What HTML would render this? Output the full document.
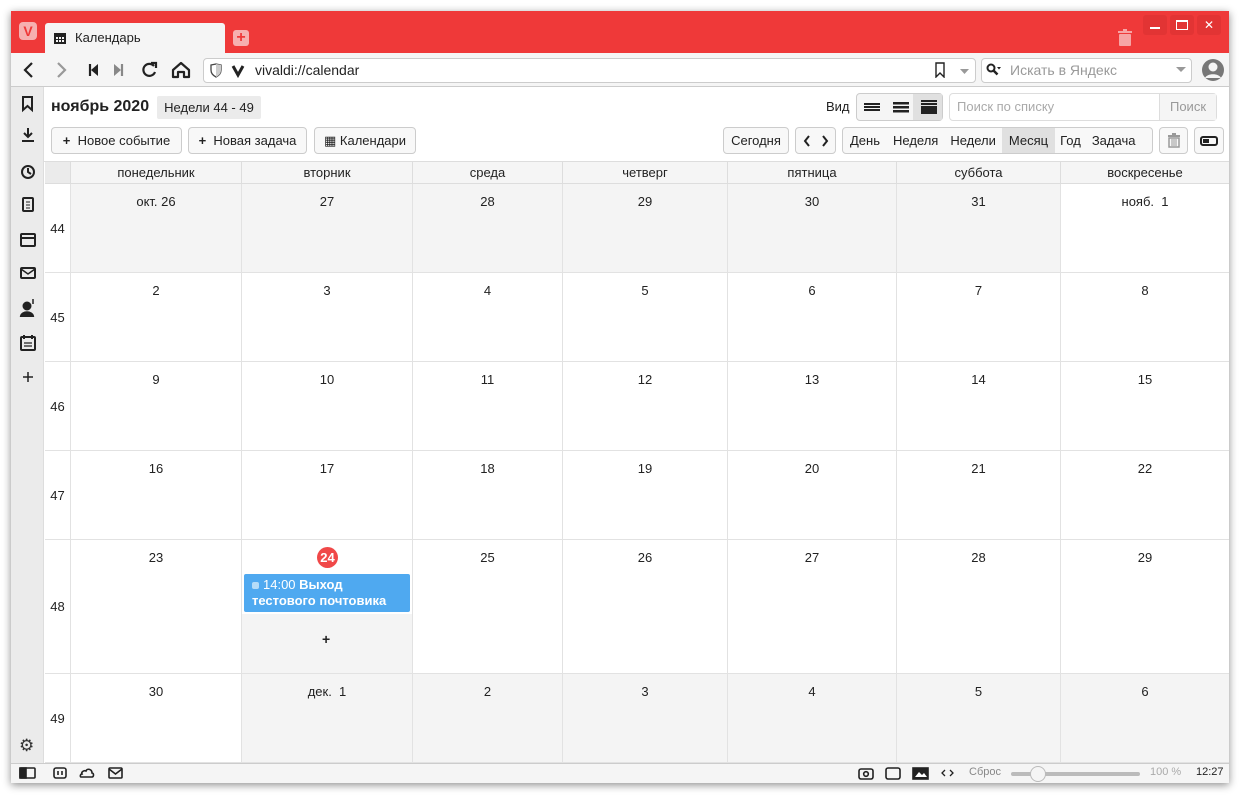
<!DOCTYPE html><html><head><meta charset="utf-8"><style>
*{box-sizing:border-box;margin:0;padding:0}
body{width:1248px;height:803px;background:#fff;font-family:"Liberation Sans","DejaVu Sans",sans-serif;font-size:13px;color:#222;position:relative;overflow:hidden}
.a{position:absolute}
.win{left:11px;top:11px;width:1218px;height:772px;box-shadow:0 2px 8px rgba(0,0,0,.45);background:#fff}
.btn{position:absolute;height:27px;border:1px solid #ccc;border-radius:4px;background:#f8f8f8;display:flex;align-items:center;justify-content:center;font-size:13px;color:#222}
.hd{position:absolute;top:162px;height:22px;background:#f5f5f5;border-bottom:1px solid #ddd;border-right:1px solid #ddd;text-align:center;line-height:22px;font-size:13px}
.c{position:absolute;border-right:1px solid #e2e2e2;border-bottom:1px solid #e2e2e2;text-align:center;padding-top:10px;font-size:13px}
.g{background:#f4f4f4}
.wk{position:absolute;left:45px;width:26px;border-right:1px solid #e2e2e2;border-bottom:1px solid #e2e2e2;display:flex;align-items:center;justify-content:center;font-size:13px;background:#fff}
</style></head><body>
<div class="a win"></div>
<div class="a" style="left:11px;top:11px;width:1218px;height:42px;background:#ef3939"></div>
<div class="a" style="left:19px;top:22px;width:18px;height:18px;background:#f6b0b0;border-radius:4px;color:#ef3939;font-weight:bold;text-align:center;line-height:18px;font-size:14px">V</div>
<div class="a" style="left:45px;top:23px;width:180px;height:30px;background:#f5f5f5;border-radius:3px 3px 0 0"></div>
<svg class="a" style="left:53px;top:31px" width="14" height="14"><rect x="1" y="2" width="12" height="11" fill="#222"/><rect x="3" y="6" width="8" height="5" fill="#f5f5f5"/><rect x="5" y="6" width="1" height="5" fill="#222"/><rect x="8" y="6" width="1" height="5" fill="#222"/><rect x="3" y="8" width="8" height="1" fill="#222"/></svg>
<div class="a" style="left:75px;top:30px;font-size:13px">Календарь</div>
<div class="a" style="left:233px;top:30px;width:16px;height:16px;background:#f6b0b0;border-radius:3px;color:#ef3939;text-align:center;line-height:16px;font-weight:bold;font-size:16px">+</div>
<svg class="a" style="left:1118px;top:29px" width="14" height="17"><rect x="0" y="2" width="14" height="2" fill="#f6a5a5"/><rect x="5" y="0" width="4" height="2" fill="#f6a5a5"/><rect x="1" y="5" width="12" height="12" rx="1" fill="#f6a5a5"/></svg>
<div class="a" style="left:1143px;top:15px;width:24px;height:20px;background:#e23434;border-radius:3px"><div style="margin:12px 7px 0;width:10px;height:2px;background:#fff"></div></div>
<div class="a" style="left:1170px;top:15px;width:24px;height:20px;background:#e23434;border-radius:3px"><div style="margin:5px 6px;width:12px;height:10px;border:1.5px solid #fff;border-top-width:2.5px"></div></div>
<div class="a" style="left:1197px;top:15px;width:24px;height:20px;background:#e23434;border-radius:3px;color:#fff;text-align:center;line-height:20px;font-size:12px">✕</div>
<div class="a" style="left:11px;top:53px;width:1218px;height:34px;background:#f5f5f5;border-bottom:1px solid #ccc"></div>
<svg class="a" style="left:20px;top:60px" width="180" height="20" fill="none" stroke-width="2.2"><path d="M12 3 L5 10 L12 17" stroke="#222"/><path d="M38 3 L45 10 L38 17" stroke="#999"/><path d="M70 4v12" stroke="#222"/><path d="M78 4l-7 6 7 6z" fill="#222"/><path d="M102 4v12" stroke="#888"/><path d="M94 4l7 6-7 6z" fill="#888"/><path d="M134 6a6 6 0 1 0 1 6" stroke="#222"/><path d="M131 3h5v5" stroke="#222"/><path d="M153 10l8-7 8 7v7h-5v-5h-6v5h-5z" stroke="#222" stroke-linejoin="round"/></svg>
<div class="a" style="left:203px;top:58px;width:773px;height:25px;background:#fff;border:1px solid #ccc;border-radius:4px"></div>
<svg class="a" style="left:209px;top:63px" width="40" height="15"><path d="M2 2l5-1 5 1v5c0 4-3 6-5 7-2-1-5-3-5-7z" fill="none" stroke="#444" stroke-width="1.3"/><path d="M7 1v13c2-1 5-3 5-7V2z" fill="#ccc"/><path d="M24 3l5 9 5-9" fill="none" stroke="#222" stroke-width="3"/></svg>
<div class="a" style="left:255px;top:62px;font-size:14px">vivaldi://calendar</div>
<svg class="a" style="left:934px;top:62px" width="40" height="16"><path d="M2 1h8v14l-4-4-4 4z" fill="none" stroke="#222" stroke-width="1.4"/><path d="M26 7h9l-4.5 5z" fill="#999"/></svg>
<div class="a" style="left:981px;top:58px;width:211px;height:25px;background:#fff;border:1px solid #ccc;border-radius:4px"></div>
<svg class="a" style="left:986px;top:63px" width="16" height="14"><circle cx="5" cy="5" r="3.5" fill="none" stroke="#222" stroke-width="2"/><path d="M7.5 7.5l4 4" stroke="#222" stroke-width="2.5"/><path d="M11 4h4l-2 2.5z" fill="#222"/></svg>
<div class="a" style="left:1010px;top:62px;color:#999;font-size:14px">Искать в Яндекс</div>
<svg class="a" style="left:1176px;top:67px" width="10" height="6"><path d="M0 0h10l-5 5z" fill="#999"/></svg>
<svg class="a" style="left:1201px;top:58px" width="24" height="24"><circle cx="12" cy="12" r="11" fill="#777"/><circle cx="12" cy="9" r="4.5" fill="#f5f5f5"/><path d="M4 20c2-5 14-5 16 0" fill="#f5f5f5"/></svg>
<div class="a" style="left:11px;top:87px;width:33px;height:676px;background:#ebebeb;border-right:1px solid #ddd"></div>
<svg class="a" style="left:19px;top:95px" width="18" height="670" fill="none" stroke="#222" stroke-width="2"><path d="M4 2h9v13l-4.5-4-4.5 4z"/><path d="M9 33v8M5 38l4 4 4-4M3 46h12" /><circle cx="9" cy="77" r="6"/><path d="M9 73v4l3 2"/><rect x="4" y="103" width="10" height="13" rx="1"/><path d="M7 107h4M7 110h4M7 113h4" stroke-width="1"/><rect x="2" y="139" width="14" height="12" rx="1"/><path d="M2 143h14"/><rect x="2" y="173" width="14" height="10" rx="1"/><path d="M2 174l7 5 7-5" stroke-width="1.5"/><circle cx="8" cy="211" r="3.5" fill="#222"/><path d="M2 221c1-5 11-5 12 0z" fill="#222"/><path d="M14 204v5" stroke-width="1.5"/><rect x="2" y="242" width="14" height="13" rx="1"/><path d="M5 240v4M13 240v4" /><path d="M5 248h8M5 251h8" stroke-width="1.3"/><path d="M9 277v10M4 282h10" stroke-width="1.5"/></svg>
<div class="a" style="left:19px;top:736px;font-size:17px;color:#333">⚙</div>
<div class="a" style="left:51px;top:98px;font-size:16px;font-weight:bold">ноябрь 2020</div>
<div class="a" style="left:157px;top:96px;width:104px;height:23px;background:#ebebeb;border-radius:2px;text-align:center;line-height:23px;font-size:13px">Недели 44 - 49</div>
<div class="btn" style="left:51px;top:127px;width:131px"><b>+</b>&nbsp; Новое событие</div>
<div class="btn" style="left:188px;top:127px;width:119px"><b>+</b>&nbsp; Новая задача</div>
<div class="btn" style="left:314px;top:127px;width:102px">▦ Календари</div>
<div class="a" style="left:826px;top:99px;font-size:13px">Вид</div>
<div class="btn" style="left:856px;top:93px;width:87px;height:28px;background:#f5f5f5"></div>
<div class="a" style="left:913px;top:94px;width:29px;height:26px;background:#e0e0e0"></div>
<svg class="a" style="left:862px;top:98px" width="80" height="18" fill="#222"><rect x="2" y="5" width="16" height="2"/><rect x="2" y="8" width="16" height="2"/><rect x="2" y="11" width="16" height="2"/><rect x="31" y="4" width="16" height="2.5"/><rect x="31" y="8" width="16" height="2.5"/><rect x="31" y="12" width="16" height="2.5"/><rect x="59" y="2" width="16" height="2"/><rect x="59" y="5" width="16" height="2"/><rect x="59" y="8" width="16" height="8"/></svg>
<div class="a" style="left:949px;top:93px;width:268px;height:28px;border:1px solid #ddd;border-radius:4px;background:#fff"></div>
<div class="a" style="left:957px;top:99px;color:#aaa;font-size:13px">Поиск по списку</div>
<div class="a" style="left:1159px;top:94px;width:57px;height:26px;background:#f5f5f5;border-left:1px solid #ddd;color:#999;text-align:center;line-height:26px">Поиск</div>
<div class="btn" style="left:723px;top:127px;width:66px">Сегодня</div>
<div class="btn" style="left:795px;top:127px;width:41px"><svg width="26" height="12" fill="none" stroke="#222" stroke-width="2"><path d="M6 1L2 6l4 5M20 1l4 5-4 5"/></svg></div>
<div class="btn" style="left:842px;top:127px;width:311px;justify-content:flex-start;overflow:hidden">
<span style="padding:0 7px">День</span><span style="padding:0 6px">Неделя</span><span style="padding:0 6px">Недели</span><span style="padding:0 7px;background:#e0e0e0;line-height:25px">Месяц</span><span style="padding:0 5px">Год</span><span style="padding:0 6px">Задача</span></div>
<div class="btn" style="left:1159px;top:127px;width:29px"><svg width="12" height="15"><rect x="0" y="2" width="12" height="2" fill="#999"/><rect x="4" y="0" width="4" height="2" fill="#999"/><path d="M1 5h10v9H1z" fill="none" stroke="#999" stroke-width="1.5"/><path d="M4 6v7M6 6v7M8 6v7" stroke="#999"/></svg></div>
<div class="btn" style="left:1194px;top:127px;width:30px"><svg width="18" height="10"><rect x="1" y="1" width="16" height="8" rx="2" fill="none" stroke="#222" stroke-width="2"/><rect x="3" y="3" width="6" height="4" fill="#222"/></svg></div>
<div class="hd" style="left:45px;width:26px;background:#ebebeb"></div>
<div class="hd" style="left:71px;width:171px">понедельник</div>
<div class="hd" style="left:242px;width:171px">вторник</div>
<div class="hd" style="left:413px;width:150px">среда</div>
<div class="hd" style="left:563px;width:165px">четверг</div>
<div class="hd" style="left:728px;width:169px">пятница</div>
<div class="hd" style="left:897px;width:164px">суббота</div>
<div class="hd" style="left:1061px;width:168px;border-right:none">воскресенье</div>
<div class="a" style="left:44px;top:161px;width:1185px;height:1px;background:#ddd"></div>
<div id="grid"></div>
<script>
var X=[71,242,413,563,728,897,1061,1229],Y=[184,273,362,451,540,674,763],W=[44,45,46,47,48,49];
var D=[["окт. 26",27,28,29,30,31,"нояб.&nbsp; 1"],[2,3,4,5,6,7,8],[9,10,11,12,13,14,15],[16,17,18,19,20,21,22],[23,"",25,26,27,28,29],[30,"дек.&nbsp; 1",2,3,4,5,6]];
var h="";
for(var r=0;r<6;r++){h+='<div class="wk" style="top:'+Y[r]+'px;height:'+(Y[r+1]-Y[r])+'px">'+W[r]+'</div>';
for(var c=0;c<7;c++){var g=(r==0&&c<6)||(r==5&&c>0);
h+='<div class="c'+(g?' g':'')+'" style="left:'+X[c]+'px;top:'+Y[r]+'px;width:'+(X[c+1]-X[c])+'px;height:'+(Y[r+1]-Y[r])+'px'+(c==6?';border-right:none':'')+'">'+D[r][c]+'</div>';}}
document.getElementById("grid").innerHTML=h;
</script>
<div class="a" style="left:242px;top:614px;width:170px;height:59px;background:#f4f4f4"></div>
<div class="a" style="left:317px;top:547px;width:21px;height:21px;border-radius:50%;background:#f04848;color:#fff;font-weight:bold;text-align:center;line-height:21px;font-size:13px">24</div>
<div class="a" style="left:244px;top:574px;width:166px;height:38px;background:#4fa9f0;border-radius:2px;color:#fff;font-size:13px;line-height:16px;padding:3px 8px"><span style="display:inline-block;width:7px;height:7px;border-radius:2px;background:#b5dcf8;margin-right:4px"></span>14:00 <b>Выход<br>тестового почтовика</b></div>
<div class="a" style="left:322px;top:631px;font-weight:bold;font-size:14px">+</div>
<div class="a" style="left:11px;top:763px;width:1218px;height:20px;background:#f5f5f5;border-top:1px solid #ccc"></div>
<svg class="a" style="left:19px;top:766px" width="110" height="14" fill="none" stroke="#222" stroke-width="1.6"><rect x="1" y="2" width="15" height="10" rx="1"/><rect x="1" y="2" width="6" height="10" fill="#222"/><rect x="35" y="2" width="12" height="10" rx="2"/><path d="M39 5v4M43 5v4"/><path d="M62 11h11c2 0 2-4 0-4 0-4-5-5-6-2-2-1-5 1-4 3-2 0-2 3-1 3z"/><rect x="90" y="2" width="13" height="10" rx="1"/><path d="M90 3l6.5 5 6.5-5"/></svg>
<svg class="a" style="left:857px;top:766px" width="100" height="14" fill="none" stroke="#222" stroke-width="1.6"><rect x="2" y="3" width="14" height="10" rx="2"/><circle cx="9" cy="8" r="2.3"/><rect x="29" y="2" width="14" height="11" rx="2"/><rect x="56" y="2" width="15" height="11" fill="#222"/><path d="M58 11l4-5 3 3 2-2 3 4z" fill="#fff" stroke="none"/><path d="M88 4l-3 3 3 3M93 4l3 3-3 3" stroke-width="1.3"/></svg>
<div class="a" style="left:969px;top:766px;font-size:11px;color:#888">Сброс</div>
<div class="a" style="left:1011px;top:772px;width:129px;height:4px;background:#bbb;border-radius:2px"></div>
<div class="a" style="left:1030px;top:766px;width:16px;height:16px;border-radius:50%;background:#f5f5f5;border:1px solid #bbb"></div>
<div class="a" style="left:1150px;top:766px;font-size:11px;color:#aaa">100 %</div>
<div class="a" style="left:1196px;top:766px;font-size:11px;color:#222">12:27</div>
</body></html>
